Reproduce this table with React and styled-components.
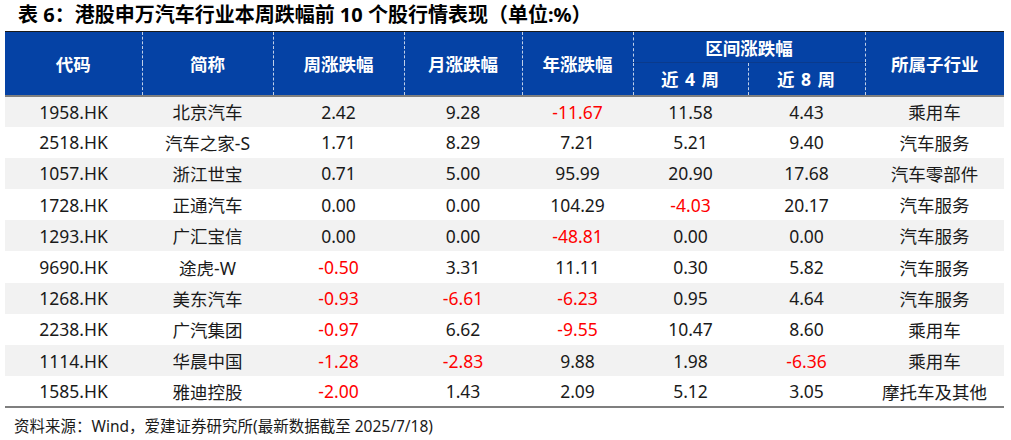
import React from "react";
import styled, { createGlobalStyle } from "styled-components";

const GlobalStyle = createGlobalStyle`
  html, body {
    margin: 0;
    padding: 0;
    background: #ffffff;
  }
  body {
    font-family: "Noto Sans", "Noto Sans CJK SC", sans-serif;
  }
`;

const Page = styled.div`
  width: 1011px;
  height: 440px;
  padding: 2px 7px 0 5px;
  box-sizing: border-box;
  display: flex;
  flex-direction: column;
`;

const Title = styled.h1`
  margin: 0 0 0 13px;
  height: 29px;
  font-size: 20px;
  line-height: 26px;
  font-weight: 700;
  color: #000000;
  white-space: nowrap;
`;

const Table = styled.table`
  width: 999px;
  border-collapse: collapse;
  table-layout: fixed;
  border-top: 1px solid #1a1a1a;
  border-bottom: 2px solid #7f7f7f;
`;

const HeadRow = styled.tr`
  height: ${p => p.$h}px;
`;

const HeadCell = styled.th`
  background: #0542a5;
  color: #ffffff;
  font-size: 17.5px;
  font-weight: 700;
  padding: 0;
  text-align: center;
  vertical-align: middle;
  border-left: ${p => (p.$first ? "none" : "1px dashed rgba(255,255,255,0.75)")};
  border-bottom: ${p => (p.$group ? "1px solid #0a3a8c" : "2px solid #7f7f7f")};
  letter-spacing: ${p => (p.$spaced ? "1px" : "0")};
`;

const BodyRow = styled.tr`
  height: 31.2px;
  background: ${p => (p.$shade ? "#f2f2f2" : "#ffffff")};
`;

const Cell = styled.td`
  padding: 0;
  text-align: center;
  vertical-align: middle;
  font-size: 17.5px;
  color: ${p => (p.$neg ? "#ff0000" : "#1a1a1a")};
  white-space: nowrap;
`;

const Source = styled.div`
  margin: 6px 0 0 9px;
  font-size: 15.5px;
  color: #1a1a1a;
  white-space: nowrap;
`;

const widths = [137, 131, 131, 118, 111, 115, 117, 139];

const rows = [
  ["1958.HK", "北京汽车", "2.42", "9.28", "-11.67", "11.58", "4.43", "乘用车"],
  ["2518.HK", "汽车之家-S", "1.71", "8.29", "7.21", "5.21", "9.40", "汽车服务"],
  ["1057.HK", "浙江世宝", "0.71", "5.00", "95.99", "20.90", "17.68", "汽车零部件"],
  ["1728.HK", "正通汽车", "0.00", "0.00", "104.29", "-4.03", "20.17", "汽车服务"],
  ["1293.HK", "广汇宝信", "0.00", "0.00", "-48.81", "0.00", "0.00", "汽车服务"],
  ["9690.HK", "途虎-W", "-0.50", "3.31", "11.11", "0.30", "5.82", "汽车服务"],
  ["1268.HK", "美东汽车", "-0.93", "-6.61", "-6.23", "0.95", "4.64", "汽车服务"],
  ["2238.HK", "广汽集团", "-0.97", "6.62", "-9.55", "10.47", "8.60", "乘用车"],
  ["1114.HK", "华晨中国", "-1.28", "-2.83", "9.88", "1.98", "-6.36", "乘用车"],
  ["1585.HK", "雅迪控股", "-2.00", "1.43", "2.09", "5.12", "3.05", "摩托车及其他"],
];

const App = () => (
  <>
    <GlobalStyle />
    <Page>
      <Title>表 6：港股申万汽车行业本周跌幅前 10 个股行情表现（单位:%）</Title>
      <Table>
        <colgroup>
          {widths.map((w, i) => (
            <col key={i} style={{ width: w }} />
          ))}
        </colgroup>
        <thead>
          <HeadRow $h={31}>
            <HeadCell rowSpan={2} $first>代码</HeadCell>
            <HeadCell rowSpan={2}>简称</HeadCell>
            <HeadCell rowSpan={2}>周涨跌幅</HeadCell>
            <HeadCell rowSpan={2}>月涨跌幅</HeadCell>
            <HeadCell rowSpan={2}>年涨跌幅</HeadCell>
            <HeadCell colSpan={2} $group>区间涨跌幅</HeadCell>
            <HeadCell rowSpan={2}>所属子行业</HeadCell>
          </HeadRow>
          <HeadRow $h={33}>
            <HeadCell $spaced>近 4 周</HeadCell>
            <HeadCell $spaced>近 8 周</HeadCell>
          </HeadRow>
        </thead>
        <tbody>
          {rows.map((r, i) => (
            <BodyRow key={r[0]} $shade={i % 2 === 0}>
              {r.map((v, j) => (
                <Cell key={j} $neg={j >= 2 && j <= 6 && v.startsWith("-")}>
                  {v}
                </Cell>
              ))}
            </BodyRow>
          ))}
        </tbody>
      </Table>
      <Source>资料来源：Wind，爱建证券研究所(最新数据截至 2025/7/18)</Source>
    </Page>
  </>
);

export default App;
